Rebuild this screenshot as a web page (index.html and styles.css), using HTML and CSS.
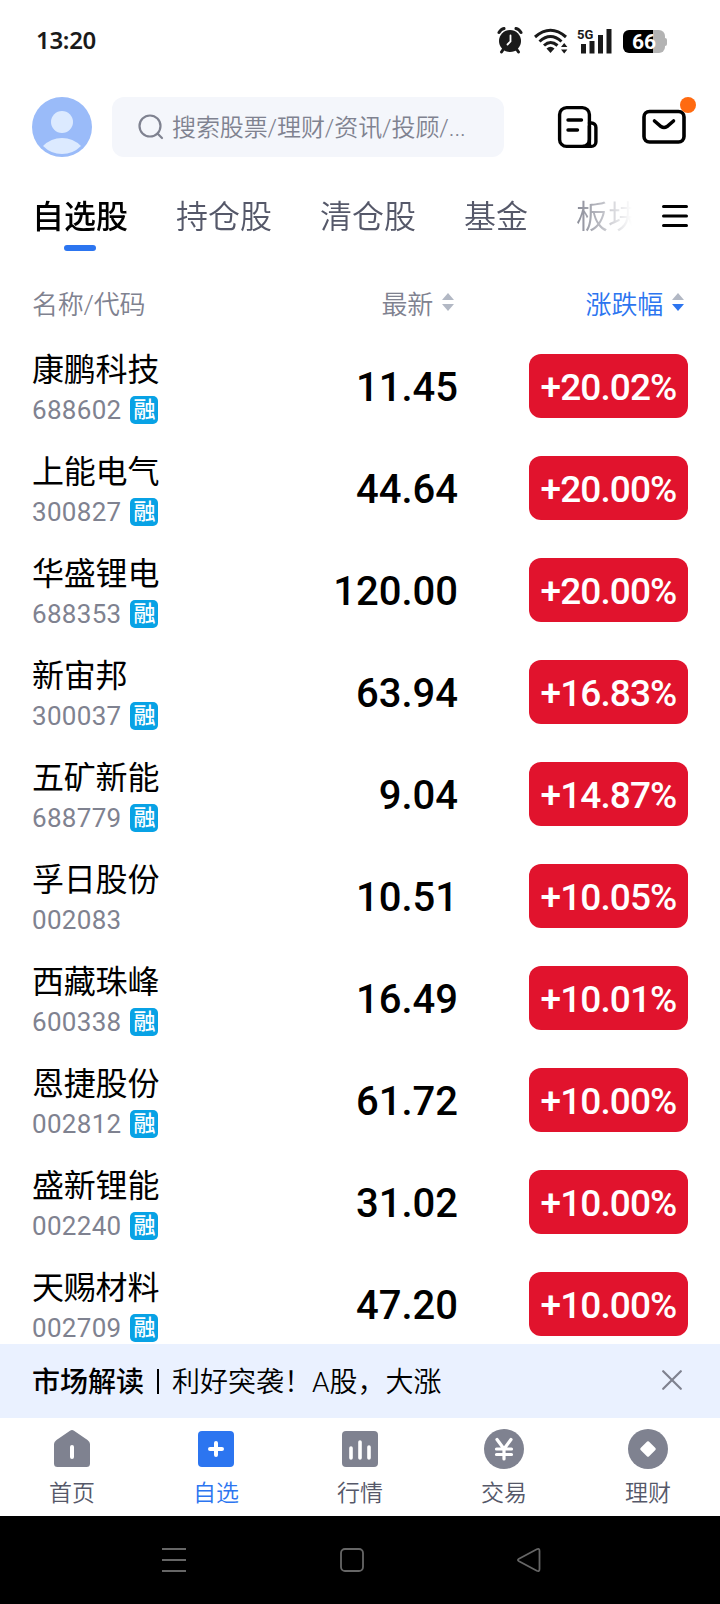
FILE: index.html
```html
<!DOCTYPE html>
<html lang="zh-CN">
<head>
    <meta charset="UTF-8">
    <title>自选股</title>
    <link rel="stylesheet" href="styles.css">
</head>
<body>
    <div class="status-bar">
        <span class="time">13:20</span>
        <div class="status-icons">
            <svg class="alarm" width="26" height="27" viewBox="0 0 26 27">
                <circle cx="13" cy="14" r="11" fill="#1a1a1a"/>
                <path d="M2 5.500Q4 2 7 1.500M19 1.500Q22 2 24 5.500M6.500 22l-2 3M19.500 22l2 3" fill="none" stroke="#1a1a1a" stroke-width="3" stroke-linecap="round"/>
                <path d="M13.500 8.500v6l-3 3" fill="none" stroke="#fff" stroke-width="1.800" stroke-linecap="round"/>
            </svg>
            <svg class="wifi" width="34" height="26" viewBox="0 0 34 26">
                <g fill="none" stroke="#1a1a1a" stroke-width="3">
                    <path d="M1 9Q16.500-4.500 32 9"/>
                    <path d="M5.500 13.500Q16.500 3.500 27.500 13.500"/>
                    <path d="M10 17.500Q16.500 11.500 23.500 17.500"/>
                </g>
                <path d="M12.500 20.500Q16.500 17 20.500 20.500L16.500 25z" fill="#1a1a1a"/>
                <path d="M27 19l3.200-4 3.200 4zM27 21.500l3.200 4 3.200-4z" fill="#1a1a1a"/>
            </svg>
            <div class="signal">
                <span class="net">5G</span>
                <svg width="31" height="25" viewBox="0 0 31 25">
                    <path d="M0 15h5v9.500H0zM8.500 12h5v12.500h-5zM17 6h5v18.500h-5zM25.500 0h5v24.500h-5z" fill="#1a1a1a"/>
                </svg>
            </div>
            <div class="battery"><span>66</span></div>
        </div>
    </div>

    <div class="header">
        <svg class="avatar" width="60" height="60" viewBox="0 0 60 60">
            <circle cx="30" cy="30" r="30" fill="#9abbf9"/>
            <circle cx="30" cy="25" r="11" fill="#dceaff"/>
            <path d="M11 49Q19 41 30 41T49 49Q41 57 30 57T11 49z" fill="#dceaff"/>
        </svg>
        <div class="search">
            <svg width="26" height="26" viewBox="0 0 26 26" fill="none" stroke="#7f8290" stroke-width="2.200">
                <circle cx="12" cy="12" r="10.500"/>
                <path d="M19.500 19.500l4.500 4.500" stroke-linecap="round"/>
            </svg>
            <span>搜索股票/理财/资讯/投顾/...</span>
        </div>
        <svg class="doc" width="42" height="44" viewBox="0 0 42 44" fill="none" stroke="#000" stroke-width="3.400" stroke-linecap="round">
            <rect x="2.600" y="2.600" width="29.800" height="38.800" rx="7"/>
            <path d="M32.400 18h2a4.500 4.500 0 0 1 4.500 4.500v14.400a4.500 4.500 0 0 1-4.500 4.500H26M32.400 21v19"/>
            <path d="M11 15h13.500M11 25h9.500"/>
        </svg>
        <div class="mail">
            <svg width="44" height="36" viewBox="0 0 44 36" fill="none" stroke="#000" stroke-width="3.600">
                <rect x="2" y="2.500" width="40" height="30.500" rx="5.500"/>
                <path d="M12.500 12l6.500 5.500q3 2 6 0L31.500 12" stroke-linecap="round"/>
            </svg>
            <i class="dot"></i>
        </div>
    </div>

    <div class="tabs">
        <div class="tab-list">
            <span class="tab active">自选股</span>
            <span class="tab">持仓股</span>
            <span class="tab">清仓股</span>
            <span class="tab">基金</span>
            <span class="tab">板块</span>
        </div>
        <svg width="26" height="22" viewBox="0 0 26 22" stroke="#000" stroke-width="3" stroke-linecap="round">
            <path d="M1.500 1.500h23M1.500 11h23M1.500 20.500h23"/>
        </svg>
    </div>

    <div class="list-head">
        <span class="col-name">名称/代码</span>
        <span class="col-price"><span>最新</span>
            <svg width="12" height="20" viewBox="0 0 12 20"><path d="M0 8l6-7 6 7z" fill="#b2b8c4"/><path d="M0 12l6 7 6-7z" fill="#b2b8c4"/></svg>
        </span>
        <span class="col-rate"><span>涨跌幅</span>
            <svg width="12" height="20" viewBox="0 0 12 20"><path d="M0 8l6-7 6 7z" fill="#b2b8c4"/><path d="M0 12l6 7 6-7z" fill="#2c75f0"/></svg>
        </span>
    </div>

    <div class="stock-list">
        <div class="stock">
            <div class="info"><div class="name">康鹏科技</div><div class="code">688602<span class="tag">融</span></div></div>
            <div class="price">11.45</div>
            <div class="rate">+20.02%</div>
        </div>
        <div class="stock">
            <div class="info"><div class="name">上能电气</div><div class="code">300827<span class="tag">融</span></div></div>
            <div class="price">44.64</div>
            <div class="rate">+20.00%</div>
        </div>
        <div class="stock">
            <div class="info"><div class="name">华盛锂电</div><div class="code">688353<span class="tag">融</span></div></div>
            <div class="price">120.00</div>
            <div class="rate">+20.00%</div>
        </div>
        <div class="stock">
            <div class="info"><div class="name">新宙邦</div><div class="code">300037<span class="tag">融</span></div></div>
            <div class="price">63.94</div>
            <div class="rate">+16.83%</div>
        </div>
        <div class="stock">
            <div class="info"><div class="name">五矿新能</div><div class="code">688779<span class="tag">融</span></div></div>
            <div class="price">9.04</div>
            <div class="rate">+14.87%</div>
        </div>
        <div class="stock">
            <div class="info"><div class="name">孚日股份</div><div class="code">002083</div></div>
            <div class="price">10.51</div>
            <div class="rate">+10.05%</div>
        </div>
        <div class="stock">
            <div class="info"><div class="name">西藏珠峰</div><div class="code">600338<span class="tag">融</span></div></div>
            <div class="price">16.49</div>
            <div class="rate">+10.01%</div>
        </div>
        <div class="stock">
            <div class="info"><div class="name">恩捷股份</div><div class="code">002812<span class="tag">融</span></div></div>
            <div class="price">61.72</div>
            <div class="rate">+10.00%</div>
        </div>
        <div class="stock">
            <div class="info"><div class="name">盛新锂能</div><div class="code">002240<span class="tag">融</span></div></div>
            <div class="price">31.02</div>
            <div class="rate">+10.00%</div>
        </div>
        <div class="stock">
            <div class="info"><div class="name">天赐材料</div><div class="code">002709<span class="tag">融</span></div></div>
            <div class="price">47.20</div>
            <div class="rate">+10.00%</div>
        </div>
    </div>

    <div class="notice">
        <b>市场解读</b>
        <i class="line"></i>
        <span>利好突袭！A股，大涨</span>
        <svg width="20" height="20" viewBox="0 0 20 20" stroke="#7f8290" stroke-width="2.200" stroke-linecap="round">
            <path d="M1.200 1.200l17.600 17.600M18.800 1.200L1.200 18.800"/>
        </svg>
    </div>

    <div class="tabbar">
        <div class="item">
            <svg width="40" height="40" viewBox="0 0 40 40">
                <path d="M4.500 11L18 1.700q2-1.400 4 0L35.500 11q2.500 1.800 2.500 4v19.500q0 3.500-3.500 3.500h-29Q2 38 2 34.500V15q0-2.200 2.500-4z" fill="#7f8290"/>
                <path d="M20 18v10" stroke="#fff" stroke-width="4" stroke-linecap="round"/>
            </svg>
            <span>首页</span>
        </div>
        <div class="item active">
            <svg width="40" height="40" viewBox="0 0 40 40">
                <rect x="2" y="2" width="36" height="36" rx="4" fill="#2c75f0"/>
                <path d="M20 14v12M14 20h12" stroke="#fff" stroke-width="4" stroke-linecap="round"/>
            </svg>
            <span>自选</span>
        </div>
        <div class="item">
            <svg width="40" height="40" viewBox="0 0 40 40">
                <rect x="2" y="2" width="36" height="36" rx="4" fill="#7f8290"/>
                <path d="M11 19v10M20 13v16M29 18v11" stroke="#fff" stroke-width="3.600" stroke-linecap="round"/>
            </svg>
            <span>行情</span>
        </div>
        <div class="item">
            <svg width="40" height="40" viewBox="0 0 40 40">
                <circle cx="20" cy="20" r="20" fill="#7f8290"/>
                <path d="M13 10.500l7 9.500 7-9.500M20 20v10M12.500 20h15M12.500 25.500h15" fill="none" stroke="#fff" stroke-width="3.200" stroke-linecap="round"/>
            </svg>
            <span>交易</span>
        </div>
        <div class="item">
            <svg width="40" height="40" viewBox="0 0 40 40">
                <circle cx="20" cy="20" r="20" fill="#7f8290"/>
                <path d="M20 13.500l6.500 6.500-6.500 6.500-6.500-6.500z" fill="#fff" stroke="#fff" stroke-width="2.500" stroke-linejoin="round"/>
            </svg>
            <span>理财</span>
        </div>
    </div>

    <div class="sys-nav">
        <svg width="24" height="24" viewBox="0 0 24 24"><path d="M0 1h24M0 12h24M0 23h24"/></svg>
        <svg width="24" height="24" viewBox="0 0 24 24"><rect x="1" y="1" width="22" height="22" rx="4"/></svg>
        <svg width="24" height="24" viewBox="0 0 24 24"><path d="M2 10.700L19.800 1.300Q22.500 0 22.500 3v18q0 3-2.700 1.700L2 13.300q-2.200-1.300 0-2.600z"/></svg>
    </div>
</body>
</html>
```
FILE: styles.css
```css
:root {
    --blue: #2c75f0;
    --red: #e1132d;
    --gray: #7f8290;
    --text: #555869;
}

* {
    box-sizing: border-box;
}

body {
    margin: 0;
    width: 720px;
    height: 1604px;
    display: flex;
    flex-direction: column;
    overflow: hidden;
    background: #fff;
    color: #000;
    font-family: Roboto, "Noto Sans CJK SC", sans-serif;
    font-weight: 350;
}

svg {
    display: block;
    flex: none;
}

/* 状态栏 */
.status-bar {
    height: 82px;
    padding: 0 53px 0 36px;
    display: flex;
    justify-content: space-between;
    align-items: center;
}

.time {
    font: 600 24px/30px "Noto Sans", sans-serif;
    letter-spacing: -0.3px;
    margin-top: -1px;
    color: #1a1a1a;
}

.status-icons {
    display: flex;
    align-items: center;
}

.wifi {
    margin: 1px 0 0 11px;
}

.signal {
    position: relative;
    width: 35px;
    margin: 1px 0 0 9px;
    display: flex;
    justify-content: flex-end;
}

.net {
    position: absolute;
    left: 0;
    top: -1px;
    font: 700 13px/13px Roboto, sans-serif;
    color: #1a1a1a;
}

.battery {
    width: 42px;
    height: 23px;
    margin: 2px 2px 0 11px;
    border-radius: 6px;
    background: linear-gradient(90deg, #000 30px, #b3b3b3 30px);
    color: #fff;
    font: 700 21px/24px Roboto, sans-serif;
    text-align: center;
    position: relative;
}

.battery::after {
    content: "";
    position: absolute;
    right: -2px;
    top: 8px;
    width: 2px;
    height: 8px;
    border-radius: 0 2px 2px 0;
    background: #b3b3b3;
}

/* 头部搜索 */
.header {
    height: 90px;
    padding: 15px 34px 0 32px;
    display: flex;
    align-items: flex-start;
}

.search {
    width: 392px;
    height: 60px;
    margin-left: 20px;
    padding-left: 26px;
    display: flex;
    align-items: center;
    gap: 8px;
    border-radius: 12px;
    background: #f4f6fb;
    color: var(--gray);
    font-size: 24px;
    line-height: 60px;
    letter-spacing: -0.1px;
    white-space: nowrap;
}

.search span {
    padding-top: 3px;
}

.doc {
    margin: 8px 0 0 53px;
}

.mail {
    position: relative;
    margin: 12px 0 0 auto;
}

.dot {
    position: absolute;
    right: -10px;
    top: -12px;
    width: 16px;
    height: 16px;
    border-radius: 50%;
    background: #ff6a10;
}

/* 分组标签 */
.tabs {
    height: 88px;
    padding: 0 32px;
    display: flex;
    align-items: center;
    justify-content: space-between;
}

.tab-list {
    width: 600px;
    height: 88px;
    display: flex;
    gap: 48px;
    overflow: hidden;
    -webkit-mask-image: linear-gradient(90deg, #000 520px, transparent 600px);
    mask-image: linear-gradient(90deg, #000 520px, transparent 600px);
}

.tab {
    flex: none;
    color: var(--text);
    font-size: 32px;
    line-height: 91px;
}

.tab.active {
    position: relative;
    color: #000;
    font-weight: 500;
}

.tab.active::after {
    content: "";
    position: absolute;
    left: 32px;
    top: 73px;
    width: 32px;
    height: 6px;
    border-radius: 3px;
    background: var(--blue);
}

/* 自选列表 */
.list-head,
.stock {
    display: grid;
    grid-template-columns: 200px 226px 1fr;
    padding: 0 32px;
}

.list-head {
    height: 85px;
    line-height: 90px;
    font-size: 26px;
    letter-spacing: -0.2px;
    color: var(--gray);
}

.col-price,
.col-rate {
    height: 85px;
    display: flex;
    align-items: center;
    justify-content: flex-end;
    gap: 9px;
    padding-right: 4px;
}

.col-price span,
.col-rate span {
    padding-top: 5px;
}

.col-rate {
    color: var(--blue);
}

.stock-list {
    height: 1001px;
    padding-top: 2px;
    overflow: hidden;
}

.stock {
    height: 102px;
}

.name {
    height: 44px;
    margin-top: 1px;
    font-size: 32px;
    font-weight: 400;
    line-height: 44px;
    letter-spacing: -0.2px;
}

.code {
    height: 28px;
    margin-top: 4px;
    display: flex;
    align-items: center;
    color: var(--gray);
    font-size: 26px;
    font-weight: 400;
    letter-spacing: 0.3px;
}

.tag {
    width: 28px;
    height: 28px;
    margin-left: 9px;
    border-radius: 5px;
    background: #08a2e5;
    color: #fff;
    font-size: 22px;
    font-weight: 500;
    line-height: 28px;
    letter-spacing: 0;
    text-align: center;
}

.price {
    font-size: 40px;
    font-weight: 500;
    line-height: 82px;
    text-align: right;
}

.rate {
    width: 159px;
    height: 64px;
    margin-top: 7px;
    justify-self: end;
    border-radius: 12px;
    background: var(--red);
    color: #fff;
    font-size: 37px;
    font-weight: 500;
    letter-spacing: -0.9px;
    line-height: 68px;
    text-align: center;
}

/* 市场解读 */
.notice {
    height: 74px;
    padding: 0 38px 0 32px;
    display: flex;
    align-items: center;
    background: #eaf1ff;
    font-size: 28px;
    line-height: 70px;
}

.notice b,
.notice span {
    padding-top: 3px;
}

.notice b {
    font-weight: 500;
}

.notice .line {
    width: 2px;
    height: 25px;
    margin: 0 14px 0 13px;
    background: #000;
}

.notice span {
    margin-left: -1px;
}

.notice svg {
    margin: -2px 0 0 auto;
}

/* 底部导航 */
.tabbar {
    height: 98px;
    display: flex;
}

.item {
    flex: 1;
    padding-top: 11px;
    display: flex;
    flex-direction: column;
    align-items: center;
    color: var(--text);
    font-size: 23px;
    line-height: 32px;
}

.item span {
    margin-top: 9px;
}

.item.active {
    color: var(--blue);
}

.sys-nav {
    height: 88px;
    padding: 0 179px 0 162px;
    display: flex;
    align-items: center;
    justify-content: space-between;
    background: #000;
    fill: none;
    stroke: #666;
    stroke-width: 1.800;
}
```
